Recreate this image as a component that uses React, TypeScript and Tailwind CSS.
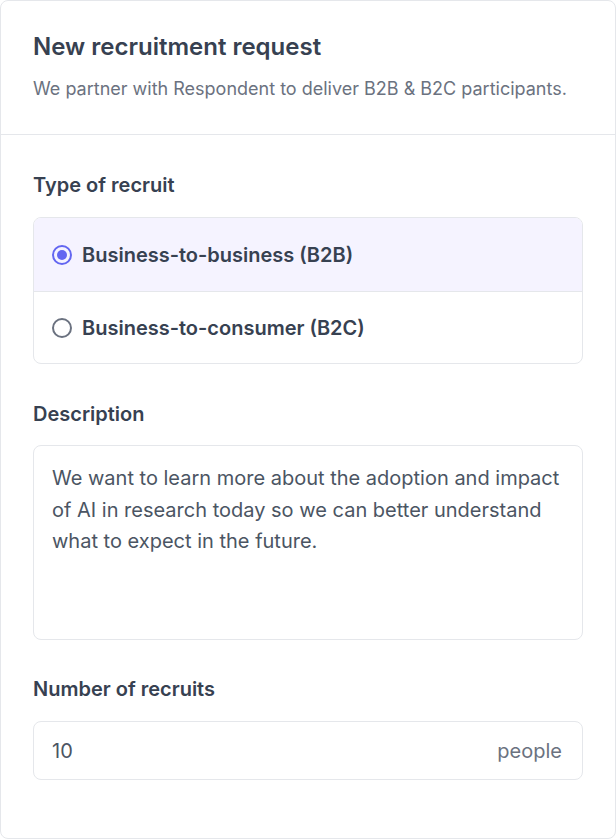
import React from "react";

export default function App() {
  return (
    <div className="w-[616px] bg-white" style={{ fontFamily: "Inter, 'Noto Sans', sans-serif" }}>
      <div className="h-[839px] border border-[#e5e7eb] rounded-[8px] bg-white flex flex-col">
        <div className="px-8 pt-[30px] pb-[31px] border-b border-[#e5e7eb]">
          <h1 className="text-[24px] leading-[32px] font-semibold text-[#374151]">New recruitment request</h1>
          <p className="mt-[12px] text-[18px] leading-[28px] text-[#6b7280]">
            We partner with Respondent to deliver B2B &amp; B2C participants.
          </p>
        </div>
        <div className="px-8 pt-[36px] flex flex-col">
          <div className="text-[20px] leading-[28px] font-semibold text-[#374151]">Type of recruit</div>
          <div className="mt-[18px] border border-[#e5e7eb] rounded-[8px] overflow-hidden">
            <label className="flex items-center gap-[10px] h-[74px] px-[18px] bg-[#f5f3ff] border-b border-[#e5e7eb]">
              <span className="w-[20px] h-[20px] rounded-full border-2 border-[#6366f1] flex items-center justify-center">
                <span className="w-[10px] h-[10px] rounded-full bg-[#6366f1]" />
              </span>
              <span className="text-[20px] font-semibold text-[#374151]">Business-to-business (B2B)</span>
            </label>
            <label className="flex items-center gap-[10px] h-[71px] px-[18px]">
              <span className="w-[20px] h-[20px] rounded-full border-2 border-[#6b7280]" />
              <span className="text-[20px] font-semibold text-[#374151]">Business-to-consumer (B2C)</span>
            </label>
          </div>
          <div className="mt-[36px] text-[20px] leading-[28px] font-semibold text-[#374151]">Description</div>
          <div className="mt-[17px] h-[195px] border border-[#e5e7eb] rounded-[8px] px-[18px] pt-[17px]">
            <p className="text-[20px] leading-[31.5px] text-[#4b5563]">
              We want to learn more about the adoption and impact of AI in research today so we can better understand what to expect in the future.
            </p>
          </div>
          <div className="mt-[35px] text-[20px] leading-[28px] font-semibold text-[#374151]">Number of recruits</div>
          <div className="mt-[18px] h-[59px] border border-[#e5e7eb] rounded-[8px] pl-[18px] pr-[20px] flex items-center justify-between">
            <span className="text-[20px] text-[#4b5563]">10</span>
            <span className="text-[20px] text-[#6b7280]">people</span>
          </div>
        </div>
      </div>
    </div>
  );
}
